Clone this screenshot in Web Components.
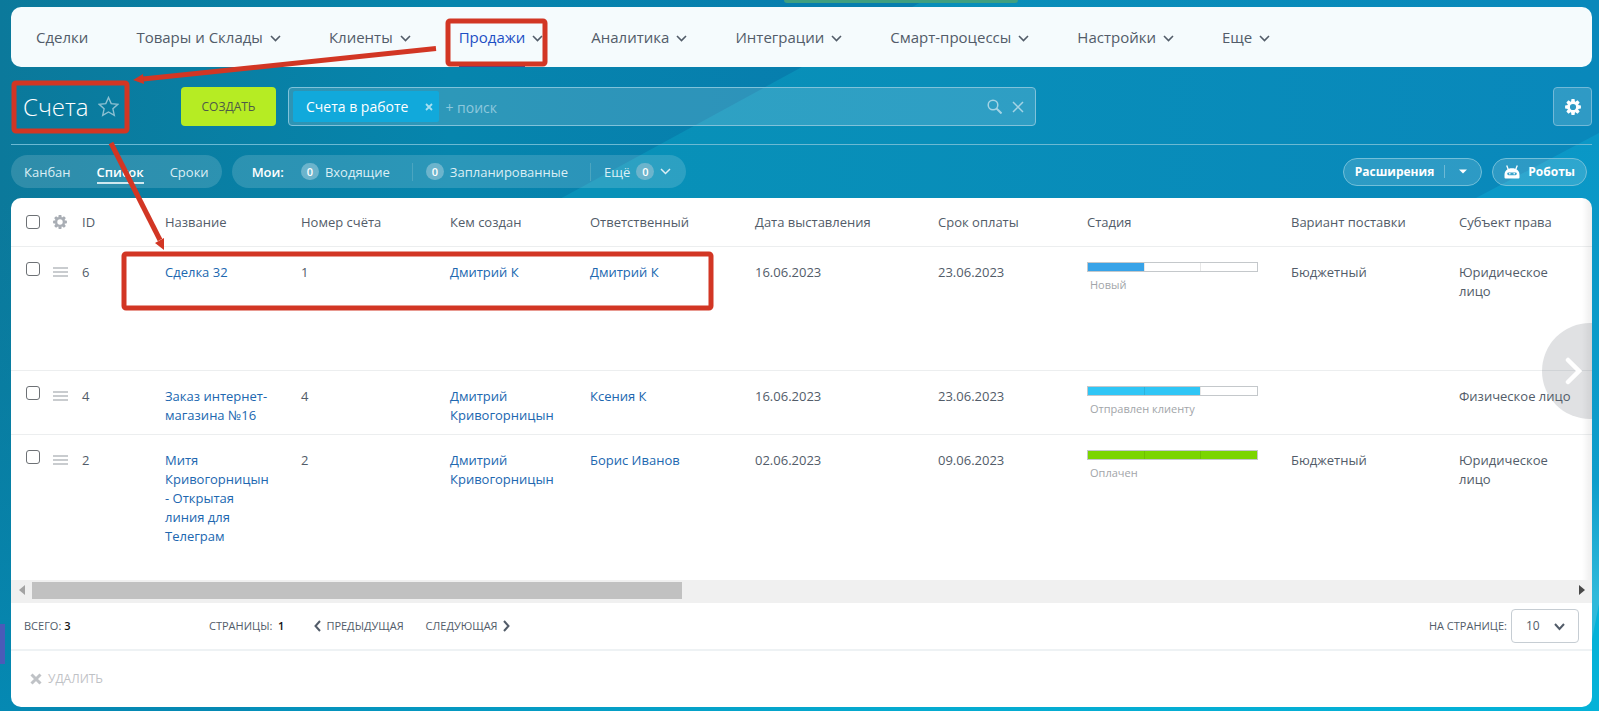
<!DOCTYPE html>
<html lang="ru">
<head>
<meta charset="utf-8">
<title>Счета</title>
<style>
  body { margin: 0; min-height: 100vh; font-family: "Open Sans", "Noto Sans", sans-serif; color: #525c69; background: #0889b0; }
</style>
</head>
<body>
<crm-page></crm-page>

<template id="t-page">
  <style>
    :host { display: block; position: relative; overflow: hidden; min-height: 100vh; box-sizing: border-box; padding: 7px 7px 4px 11px; }
    main { position: relative; display: flex; flex-direction: column; }
    .notice { position: absolute; top: 0; left: 49%; width: 234px; height: 3px; background: #3f9f80; border-radius: 0 0 4px 4px; }
    .tab { position: absolute; left: 0; top: 624px; width: 5px; height: 40px; background: #4a5bb8; }
  </style>
  <crm-backdrop></crm-backdrop>
  <div class="notice"></div>
  <div class="tab"></div>
  <main>
    <crm-nav></crm-nav>
    <crm-toolbar></crm-toolbar>
    <crm-filters></crm-filters>
    <crm-grid></crm-grid>
  </main>
  <crm-markup></crm-markup>
</template>

<template id="t-backdrop">
  <style>
    :host { position: absolute; inset: 0; }
    svg { display: block; width: 100%; height: 100%; }
  </style>
  <svg viewBox="0 0 1599 711" preserveAspectRatio="none" aria-hidden="true">
    <defs>
      <linearGradient id="a" x1="0" y1="0" x2="900" y2="0" gradientUnits="userSpaceOnUse">
        <stop offset="0" stop-color="#0b799b"/><stop offset=".5" stop-color="#0685ad"/><stop offset=".9" stop-color="#077eae"/>
      </linearGradient>
      <linearGradient id="b" x1="600" y1="0" x2="1599" y2="0" gradientUnits="userSpaceOnUse">
        <stop offset="0" stop-color="#0891b8"/><stop offset="1" stop-color="#0988bb"/>
      </linearGradient>
      <linearGradient id="c" x1="0" y1="133" x2="0" y2="711" gradientUnits="userSpaceOnUse">
        <stop offset="0" stop-color="#0a97c6"/><stop offset=".6" stop-color="#0c9dcb"/><stop offset=".8" stop-color="#2fb9da"/>
      </linearGradient>
      <linearGradient id="d" x1="0" y1="0" x2="0" y2="1">
        <stop offset="0" stop-color="#0681a8" stop-opacity="0"/><stop offset="1" stop-color="#0589b3"/>
      </linearGradient>
      <linearGradient id="e" x1="250" y1="0" x2="1599" y2="0" gradientUnits="userSpaceOnUse">
        <stop offset="0" stop-color="#0590ba"/><stop offset=".5" stop-color="#05abd0"/><stop offset="1" stop-color="#04b2d8"/>
      </linearGradient>
    </defs>
    <rect width="1599" height="711" fill="url(#a)"/>
    <rect width="400" height="511" y="200" fill="url(#d)"/>
    <path d="M925 0H1599V200H558z" fill="url(#b)"/>
    <path d="M1599 133V711H1000V440L1476 198z" fill="url(#c)"/>
    <path d="M250 700H1580L1599 604V711H250z" fill="url(#e)"/>
  </svg>
</template>

<template id="t-nav">
  <style>
    :host { display: block; background: #f5fbfd; border-radius: 10px; }
    nav { display: flex; gap: 48px; height: 60px; padding-left: 25px; align-items: stretch; }
  </style>
  <nav>
    <crm-nav-item plain>Сделки</crm-nav-item>
    <crm-nav-item>Товары и Склады</crm-nav-item>
    <crm-nav-item>Клиенты</crm-nav-item>
    <crm-nav-item active>Продажи</crm-nav-item>
    <crm-nav-item>Аналитика</crm-nav-item>
    <crm-nav-item>Интеграции</crm-nav-item>
    <crm-nav-item>Смарт-процессы</crm-nav-item>
    <crm-nav-item>Настройки</crm-nav-item>
    <crm-nav-item>Еще</crm-nav-item>
  </nav>
</template>

<template id="t-nav-item">
  <style>
    :host { display: flex; align-items: center; gap: 7px; font-size: 15px; color: #525c69; white-space: nowrap; }
    a { display: flex; align-items: center; height: 100%; box-sizing: border-box; border-bottom: 2px solid transparent; padding-top: 2px; color: inherit; text-decoration: none; }
    :host([active]) a { color: #1d4fc4; border-color: #1d3fae; }
    svg { width: 11px; height: 7px; margin-top: 3px; }
    :host([plain]) svg { display: none; }
  </style>
  <a href="#"><slot></slot></a>
  <svg viewBox="0 0 11 7" aria-hidden="true"><path d="M1 1l4.500 4.500L10 1" fill="none" stroke="#525c69" stroke-width="1.600"/></svg>
</template>

<template id="t-toolbar">
  <style>
    :host { display: flex; align-items: center; height: 39px; padding: 20px 0 18px; border-bottom: 1px solid #6bb9d3; }
    h1 { margin: 0 0 0 12px; font-size: 24px; line-height: 32px; font-weight: 300; color: #fff; }
    .star { margin: 0 auto 0 10px; width: 21px; height: 21px; padding: 0; border: 0; background: none; }
    .title { display: flex; align-items: center; width: 170px; }
    .create { width: 95px; height: 39px; border: 0; border-radius: 4px; background: #b6ec23; color: #4e5a48; font: 12px "Open Sans", sans-serif; }
    .search { display: flex; align-items: center; margin: 0 12px; flex: 0 1 748px; height: 39px; box-sizing: border-box; padding: 0 11px 0 4px; border: 1px solid #80c2da; border-radius: 4px; background: #ffffff28; }
    .tag { display: flex; align-items: center; gap: 17px; height: 31px; box-sizing: border-box; padding: 0 6px 0 13px; border-radius: 2px; background: #11a9db; color: #fff; font-size: 14px; white-space: nowrap; }
    button svg, .ico svg { display: block; }
    .ico { padding: 0; border: 0; background: none; }
    input { flex: 1; min-width: 40px; margin: 2px 0 0 6px; padding: 0; border: 0; outline: 0; background: none; font: 14px "Open Sans", sans-serif; color: #fff; }
    input::placeholder { color: #8dc8dd; opacity: 1; }
    .gear { display: grid; place-items: center; margin-left: auto; width: 39px; height: 39px; padding: 0; border: 1px solid #72b9d8; border-radius: 4px; background: #ffffff28; color: #fff; }
    .gap { width: 10px; }
  </style>
  <div class="title">
    <h1>Счета</h1>
    <button class="star" aria-label="В избранное"><svg width="21" height="21" viewBox="0 0 21 21"><path d="M10.500 1.500l2.700 6.100 6.600.7-4.900 4.500 1.400 6.600-5.800-3.400-5.800 3.400 1.400-6.600L1.200 8.300l6.600-.7z" fill="none" stroke="#8cc0d2" stroke-width="1.400"/></svg></button>
  </div>
  <button class="create">СОЗДАТЬ</button>
  <div class="search">
    <span class="tag">Счета в работе
      <button class="ico" aria-label="Убрать фильтр"><svg width="8" height="8" viewBox="0 0 8 8"><path d="M1 1l6 6M7 1L1 7" stroke="#a5dff1" stroke-width="1.800"/></svg></button>
    </span>
    <input type="text" placeholder="+ поиск" aria-label="Поиск">
    <button class="ico" aria-label="Найти"><svg width="15" height="15" viewBox="0 0 15 15"><circle cx="6" cy="6" r="4.800" fill="none" stroke="#a4d4e5" stroke-width="1.500"/><path d="M9.500 9.500l5 5" stroke="#a4d4e5" stroke-width="2"/></svg></button>
    <span class="gap"></span>
    <button class="ico" aria-label="Очистить"><svg width="12" height="12" viewBox="0 0 12 12"><path d="M1 1l10 10M11 1L1 11" stroke="#a4d4e5" stroke-width="1.500"/></svg></button>
  </div>
  <button class="gear" aria-label="Настройки"><crm-gear></crm-gear></button>
</template>

<template id="t-gear">
  <style>:host { display: block; width: 16px; height: 16px; } svg { display: block; width: 100%; height: 100%; }</style>
  <svg viewBox="-8 -8 16 16" aria-hidden="true">
    <circle r="4.400" fill="none" stroke="currentColor" stroke-width="2.600"/>
    <g fill="currentColor">
      <path id="g" d="M-1.500-7.900h3l.5 3h-4z"/>
      <use href="#g" transform="rotate(45)"/><use href="#g" transform="rotate(90)"/><use href="#g" transform="rotate(135)"/>
      <use href="#g" transform="rotate(180)"/><use href="#g" transform="rotate(225)"/><use href="#g" transform="rotate(270)"/><use href="#g" transform="rotate(315)"/>
    </g>
  </svg>
</template>

<template id="t-filters">
  <style>
    :host { display: flex; align-items: center; gap: 10px; height: 33px; padding: 10px 0; font-size: 13px; color: #dceff5; white-space: nowrap; }
    .pill { display: flex; align-items: center; height: 33px; border-radius: 17px; background: #ffffff26; }
    .views { gap: 26px; padding: 0 13px; }
    a { color: inherit; text-decoration: none; }
    .views a { line-height: 20px; border-bottom: 2px solid transparent; margin-top: 2px; }
    .views .on { color: #fff; border-color: #d0e8ef; font-weight: 600; }
    .mine { padding: 0 15px 0 20px; }
    b { font-weight: 600; color: #fff; margin-right: 17px; }
    .mine a { display: flex; align-items: center; gap: 6px; }
    .mine i { width: 1px; height: 18px; background: #4ba5c0; margin: 0 13px 0 22px; }
    em { display: grid; place-items: center; width: 18px; height: 17px; border-radius: 9px; background: #6cb4cc; font: 600 11px/17px "Open Sans", sans-serif; color: #fff; }
    .right { display: flex; gap: 10px; margin: 0 5px 0 auto; }
    .right button { display: flex; align-items: center; height: 28px; padding: 0 12px; border: 1px solid #72bfd9; border-radius: 14px; background: #ffffff26; color: #fff; font: 700 12px "Open Sans", sans-serif; }
    .right i { width: 1px; height: 13px; background: #6db9d5; margin: 0 14px 0 10px; }
    .right .ext { padding: 0 14px 0 11px; }
    .right .rob { gap: 8px; padding: 0 11px; }
  </style>
  <div class="pill views"><a href="#">Канбан</a><a href="#" class="on">Список</a><a href="#">Сроки</a></div>
  <div class="pill mine">
    <b>Мои:</b>
    <a href="#"><em>0</em>Входящие</a><i></i>
    <a href="#"><em>0</em>Запланированные</a><i></i>
    <a href="#">Ещё<em>0</em><svg width="11" height="7" viewBox="0 0 11 7"><path d="M1 1l4.500 4.500L10 1" fill="none" stroke="#dceff5" stroke-width="1.500"/></svg></a>
  </div>
  <div class="right">
    <button class="ext">Расширения<i></i><svg width="8" height="5" viewBox="0 0 8 5"><path d="M0 .5h8L4 4.500z" fill="#fff"/></svg></button>
    <button class="rob"><svg width="16" height="14" viewBox="0 0 16 14"><path d="M2.700 .4l1.600 4M13.300 .4l-1.600 4" stroke="#fff" stroke-width="1.300"/><path d="M.5 12.500V10C.5 5.500 3.500 3.200 8 3.200s7.500 2.300 7.500 6.800v2.500q0 1-1 1h-13q-1 0-1-1z" fill="#fff"/><rect x="3.200" y="7.400" width="9.600" height="2.800" rx="1.400" fill="#3aa4cc"/><circle cx="5.800" cy="8.800" r=".8" fill="#fff"/><circle cx="10.200" cy="8.800" r=".8" fill="#fff"/></svg>Роботы</button>
  </div>
</template>

<template id="t-progress">
  <style>
    :host { display: block; width: 171px; font-size: 11px; line-height: 15px; color: #a2a5a9; }
    .bar { display: flex; height: 10px; box-sizing: border-box; border: 1px solid #c4c8cb; }
    .bar span { flex: 1; }
    .bar span + span { border-left: 1px solid #00000018; }
    .bar .f { background: var(--stage); }
    .label { margin: 5px 0 0 3px; }
  </style>
  <div class="bar"><span></span><span></span><span></span></div>
  <div class="label"><slot></slot></div>
</template>

<template id="t-grid">
  <style>
    :host { display: block; background: #fff; border-radius: 10px; overflow: hidden; }
    .view { position: relative; overflow: hidden; }
    table { width: 100%; table-layout: fixed; border-collapse: collapse; font-size: 13px; line-height: 19px; }
    th, td { padding: 16px 30px 9px 0; text-align: left; vertical-align: top; font-weight: 400; border-bottom: 1px solid #eceeef; box-sizing: border-box; }
    th { padding: 15px 0 14px; white-space: nowrap; }
    th:first-child, td:first-child { padding-left: 15px; padding-right: 0; }
    td:first-child, td.stage { padding-top: 15px; }
    td:nth-child(2) { padding-right: 0; }
    td:last-child { padding-right: 16px; }
    tr.tall { height: 124px; } tr.short { height: 64px; } tr.last { height: 145px; }
    tr.last td { border: 0; }
    a { color: #2067b0; text-decoration: none; }
    input { appearance: none; display: block; width: 14px; height: 14px; margin: 0; box-sizing: border-box; border: 1px solid #6d7175; border-radius: 3px; background: #fff; }
    th input { margin-top: 2px; }
    .ham { display: block; width: 15px; height: 10px; padding: 0; margin-top: 4px; border: 0; background: linear-gradient(#c9cccf 0 2px, transparent 2px 4px, #c9cccf 4px 6px, transparent 6px 8px, #c9cccf 8px); }
    crm-gear { color: #a8adb4; width: 14px; height: 14px; margin-top: 2px; }
    .next { position: absolute; right: -46px; top: 125px; width: 96px; height: 96px; border: 0; border-radius: 50%; background: #5359632e; padding: 0; }
    .next svg { display: block; margin-left: 23px; }
    .shade { position: absolute; inset: 0 0 0 auto; width: 10px; background: linear-gradient(90deg, transparent, #00000012); }
    .scroll { display: flex; align-items: center; height: 23px; box-sizing: border-box; background: #f0f0f0; padding: 0 7px 2px 8px; gap: 7px; }
    .scroll i { flex: none; width: 650px; max-width: 42%; height: 17px; background: #c1c1c1; }
    .scroll svg:last-child { margin-left: auto; }
    .foot { display: flex; align-items: center; height: 46px; padding: 0 13px; font-size: 11px; border-bottom: 2px solid #eef2f4; }
    .foot b { font-weight: 600; color: #111; }
    .total { width: 185px; }
    .foot button { display: flex; align-items: center; gap: 5px; border: 0; padding: 0; background: none; font: inherit; color: #525c69; margin-left: 22px; }
    .foot button:first-of-type { margin-left: 30px; }
    .foot label { margin-left: auto; }
    .sel { position: relative; margin-left: 4px; }
    select { appearance: none; display: block; width: 68px; height: 34px; padding: 0 14px; border: 1px solid #c6cdd3; border-radius: 4px; background: #fff; font: 12px "Open Sans", sans-serif; color: #525c69; }
    .sel svg { position: absolute; right: 14px; top: 14px; pointer-events: none; }
    .actions { height: 56px; display: flex; align-items: center; padding-left: 19px; }
    .actions button { display: flex; align-items: center; gap: 6px; border: 0; padding: 0; background: none; color: #bfc2c6; font: 12px "Open Sans", sans-serif; }
  </style>
  <div class="view">
    <table>
      <colgroup><col style="width:42px"><col style="width:29px"><col style="width:83px"><col style="width:136px"><col style="width:149px"><col style="width:140px"><col style="width:165px"><col style="width:183px"><col style="width:149px"><col style="width:204px"><col style="width:168px"><col></colgroup>
      <thead><tr>
        <th><input type="checkbox" aria-label="Выбрать все"></th><th><crm-gear></crm-gear></th><th>ID</th><th>Название</th><th>Номер счёта</th><th>Кем создан</th><th>Ответственный</th><th>Дата выставления</th><th>Срок оплаты</th><th>Стадия</th><th>Вариант поставки</th><th>Субъект права</th>
      </tr></thead>
      <tbody>
        <tr class="tall"><td><input type="checkbox" aria-label="Счёт 1"></td><td><button class="ham" aria-label="Действия"></button></td><td>6</td><td><a href="#">Сделка 32</a></td><td>1</td><td><a href="#">Дмитрий К</a></td><td><a href="#">Дмитрий К</a></td><td>16.06.2023</td><td>23.06.2023</td><td class="stage"><crm-progress step="1" color="#38a3e8">Новый</crm-progress></td><td>Бюджетный</td><td>Юридическое лицо</td></tr>
        <tr class="short"><td><input type="checkbox" aria-label="Счёт 4"></td><td><button class="ham" aria-label="Действия"></button></td><td>4</td><td><a href="#">Заказ интернет-магазина №16</a></td><td>4</td><td><a href="#">Дмитрий Кривогорницын</a></td><td><a href="#">Ксения К</a></td><td>16.06.2023</td><td>23.06.2023</td><td class="stage"><crm-progress step="2" color="#2fc6f6">Отправлен клиенту</crm-progress></td><td></td><td>Физическое лицо</td></tr>
        <tr class="last"><td><input type="checkbox" aria-label="Счёт 2"></td><td><button class="ham" aria-label="Действия"></button></td><td>2</td><td><a href="#">Митя Кривогорницын - Открытая линия для Телеграм</a></td><td>2</td><td><a href="#">Дмитрий Кривогорницын</a></td><td><a href="#">Борис Иванов</a></td><td>02.06.2023</td><td>09.06.2023</td><td class="stage"><crm-progress step="3" color="#7bd500">Оплачен</crm-progress></td><td>Бюджетный</td><td>Юридическое лицо</td></tr>
      </tbody>
    </table>
    <div class="shade"></div>
    <button class="next" aria-label="Прокрутить вправо"><svg width="17" height="28" viewBox="0 0 17 28"><path d="M3 3l11 11L3 25" fill="none" stroke="#fff" stroke-width="4.500" stroke-linecap="round"/></svg></button>
  </div>
  <div class="scroll">
    <svg width="6" height="10" viewBox="0 0 6 10"><path d="M6 0v10L0 5z" fill="#a3a3a3"/></svg><i></i><svg width="6" height="10" viewBox="0 0 6 10"><path d="M0 0v10l6-5z" fill="#484848"/></svg>
  </div>
  <div class="foot">
    <span class="total">ВСЕГО: <b>3</b></span>
    <span>СТРАНИЦЫ: &nbsp;<b>1</b></span>
    <button><svg width="7" height="12" viewBox="0 0 7 12"><path d="M6 1L1.500 6 6 11" fill="none" stroke="#525c69" stroke-width="2"/></svg>ПРЕДЫДУЩАЯ</button>
    <button>СЛЕДУЮЩАЯ<svg width="7" height="12" viewBox="0 0 7 12"><path d="M1 1l4.500 5L1 11" fill="none" stroke="#525c69" stroke-width="2"/></svg></button>
    <label for="size">НА СТРАНИЦЕ:</label>
    <div class="sel"><select id="size"><option>10</option><option>20</option></select><svg width="11" height="8" viewBox="0 0 11 8"><path d="M1 1l4.500 5L10 1" fill="none" stroke="#525c69" stroke-width="2"/></svg></div>
  </div>
  <div class="actions"><button><svg width="12" height="12" viewBox="0 0 12 12"><path d="M1.500 1.500l9 9M10.500 1.500l-9 9" stroke="#bfc2c6" stroke-width="3"/></svg>УДАЛИТЬ</button></div>
</template>

<template id="t-markup">
  <style>
    :host { position: absolute; top: 0; left: 0; pointer-events: none; }
    svg { display: block; width: 1px; height: 1px; overflow: visible; }
  </style>
  <svg aria-hidden="true">
    <g fill="none" stroke="#d23624" stroke-width="5" stroke-linejoin="round">
      <rect x="448" y="21" width="97" height="43" rx="2"/>
      <rect x="14" y="83" width="113" height="48" rx="2"/>
      <rect x="124" y="254" width="587" height="54" rx="2"/>
      <path d="M436 48.500L143 79"/>
      <path d="M111 143L160 240"/>
    </g>
    <g fill="#d23624">
      <path d="M133 80l10-6 1 10z"/>
      <path d="M164 250l-9-7 9-5z"/>
    </g>
  </svg>
</template>

<script>
  const stamp = (el, id) => {
    const root = el.attachShadow({ mode: 'open' });
    root.append(document.getElementById(id).content.cloneNode(true));
    return root;
  };
  const define = (name, id) => customElements.define(name, class extends HTMLElement {
    constructor() { super(); stamp(this, id); }
  });

  class CrmProgress extends HTMLElement {
    constructor() { super(); stamp(this, 't-progress'); }
    connectedCallback() {
      this.style.setProperty('--stage', this.getAttribute('color'));
      const step = Number(this.getAttribute('step'));
      this.shadowRoot.querySelectorAll('.bar span').forEach((s, i) => s.classList.toggle('f', i < step));
    }
  }
  customElements.define('crm-progress', CrmProgress);
  define('crm-gear', 't-gear');
  define('crm-backdrop', 't-backdrop');
  define('crm-nav-item', 't-nav-item');
  define('crm-nav', 't-nav');
  define('crm-toolbar', 't-toolbar');
  define('crm-filters', 't-filters');
  define('crm-grid', 't-grid');
  define('crm-markup', 't-markup');
  define('crm-page', 't-page');
</script>
</body>
</html>
